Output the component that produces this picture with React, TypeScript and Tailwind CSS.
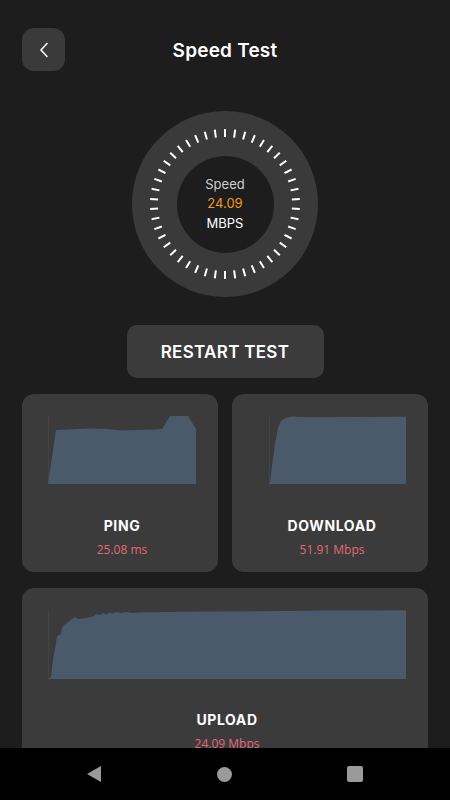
import React from 'react';

const TICKS = 46;

function Gauge() {
  const ticks = Array.from({ length: TICKS }, (_, i) => {
    const a = (i / TICKS) * Math.PI * 2;
    const cx = 93, cy = 93;
    const r1 = 67, r2 = 75;
    return (
      <line
        key={i}
        x1={cx + Math.sin(a) * r1}
        y1={cy - Math.cos(a) * r1}
        x2={cx + Math.sin(a) * r2}
        y2={cy - Math.cos(a) * r2}
        stroke="#ffffff"
        strokeWidth={2}
      />
    );
  });
  return (
    <div className="relative w-[186px] h-[186px] rounded-full bg-[#3a3a3a] flex items-center justify-center">
      <svg className="absolute inset-0" width={186} height={186} viewBox="0 0 186 186">
        {ticks}
      </svg>
      <div className="w-[97px] h-[97px] rounded-full bg-[#1d1d1d] flex flex-col items-center justify-center text-[13px] leading-[19.5px] font-['Inter',sans-serif]">
        <span className="text-[#cfcfcf]">Speed</span>
        <span className="text-[#f39a1e]">24.09</span>
        <span className="text-white">MBPS</span>
      </div>
    </div>
  );
}

function StatCard({
  label,
  value,
  path,
  w,
  h,
  axisX = 0.5,
  className,
  labelGap,
}: {
  label: string;
  value: string;
  path: string;
  w: number;
  h: number;
  axisX?: number;
  className?: string;
  labelGap: string;
}) {
  return (
    <div className={`rounded-[12px] bg-[#3b3b3b] pt-[22px] pb-[14px] pl-[26px] pr-[22px] flex flex-col ${className ?? ''}`}>
      <svg className="w-full" height={h} viewBox={`0 0 ${w} ${h}`} preserveAspectRatio="none">
        <line x1={axisX} y1={0} x2={axisX} y2={h} stroke="#444" strokeWidth={1} />
        <path d={path} fill="#4b5a6b" />
      </svg>
      <div className={`${labelGap} text-center text-white text-[14px] leading-[20px] font-bold tracking-[0.6px] font-['Inter',sans-serif]`}>
        {label}
      </div>
      <div className="mt-[6px] text-center text-[#e5687a] text-[12px] leading-[16px] font-['Open_Sans',sans-serif]">
        {value}
      </div>
    </div>
  );
}

const pingPath =
  'M0 68 L8 14 L30 13 L45 12.5 L60 13 L72 14.5 L90 14 L105 13.5 L112 13 L114 13 L122 0 L140 0 L148 13 L148 68 Z';
const downloadPath =
  'M11 68 L12 66 L14 50 L17 28 L20 12 L23 5 L26 3 L28 2 L31 1 L36 0.5 L40 1 L60 1.2 L100 1 L148 0.8 L148 68 Z';
const uploadPath =
  'M0 69 L3 67 L5 50 L7.5 36 L9 26 L11 25 L12.7 24 L14 18 L16 15 L19 13 L21 11.5 L24 9 L27.5 7 L29 8.5 L31 9 L40 7.5 L46 6 L48 4 L52 5 L56 3 L58 5 L61 2.5 L64 3.5 L68 2 L72 3 L78 2 L84 3 L91 2.5 L100 2.2 L120 2 L138 1.8 L160 1.5 L200 1.2 L240 1 L280 0.6 L320 0.4 L357 0.3 L357 69 Z';

export default function App() {
  return (
    <div className="w-full h-[800px] bg-[#1d1d1d] flex flex-col overflow-hidden font-['Inter',sans-serif]">
      <div className="flex-1 overflow-hidden flex flex-col px-[22px]">
        <div className="mt-[28px] grid grid-cols-[43px_1fr_43px] items-center">
          <button className="w-[43px] h-[43px] rounded-[12px] bg-[#3a3a3a] flex items-center justify-center">
            <svg width={12} height={16} viewBox="0 0 12 16">
              <polyline points="9,1.5 3,8 9,14.5" fill="none" stroke="#ffffff" strokeWidth={1.6} strokeLinecap="round" strokeLinejoin="round" />
            </svg>
          </button>
          <h1 className="pt-[4px] text-center text-white text-[19px] font-semibold tracking-[0.2px]">Speed Test</h1>
          <div />
        </div>

        <div className="mt-[40px] flex justify-center">
          <Gauge />
        </div>

        <div className="mt-[28px] flex justify-center">
          <button className="w-[197px] h-[53px] rounded-[10px] bg-[#3b3b3b] pt-[2px] text-white text-[17px] font-semibold tracking-[0.3px]">
            RESTART TEST
          </button>
        </div>

        <div className="mt-[16px] grid grid-cols-2 gap-[14px]">
          <StatCard label="PING" value="25.08 ms" path={pingPath} w={148} h={68} labelGap="mt-[32px]" />
          <StatCard label="DOWNLOAD" value="51.91 Mbps" path={downloadPath} w={148} h={68} axisX={11.5} labelGap="mt-[32px]" />
        </div>

        <StatCard
          className="mt-[16px]"
          label="UPLOAD"
          value="24.09 Mbps"
          path={uploadPath}
          w={357}
          h={69}
          labelGap="mt-[31px]"
        />
      </div>

      <div className="h-[52px] shrink-0 bg-black flex items-center pl-[86px] gap-[115px]">
        <svg width={16} height={16} viewBox="0 0 16 16">
          <polygon points="15,0 15,16 1,8" fill="#9a9a9a" />
        </svg>
        <div className="w-[15px] h-[15px] rounded-full bg-[#9a9a9a]" />
        <div className="w-[16px] h-[16px] rounded-[2px] bg-[#9a9a9a]" />
      </div>
    </div>
  );
}
